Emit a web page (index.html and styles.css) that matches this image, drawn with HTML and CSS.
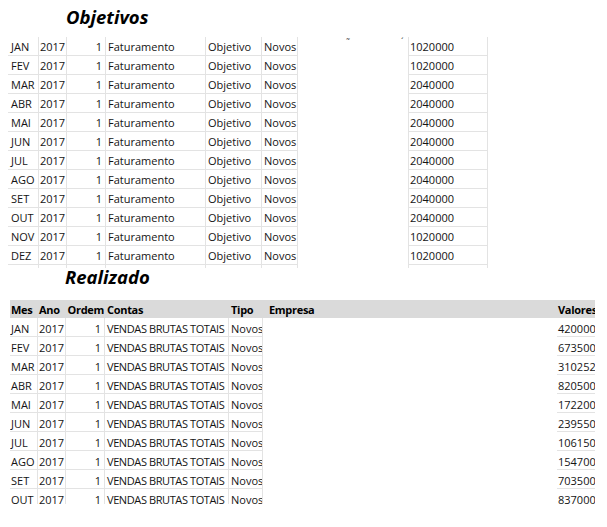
FILE: index.html
```html
<!DOCTYPE html>
<html lang="pt">
<head>
<meta charset="utf-8">
<title>Objetivos e Realizado</title>
<link rel="stylesheet" href="styles.css">
</head>
<body>
<div class="page">
  <h1 class="title title-obj">Objetivos</h1>
  <div class="obj">
    <div class="orow"><div class="c m">JAN</div><div class="c y">2017</div><div class="c o">1</div><div class="c">Faturamento</div><div class="c">Objetivo</div><div class="c">Novos</div><div class="c e"><span class="mk1">˜</span><span class="mk2">´</span></div><div class="c v">1020000</div></div>
    <div class="orow"><div class="c m">FEV</div><div class="c y">2017</div><div class="c o">1</div><div class="c">Faturamento</div><div class="c">Objetivo</div><div class="c">Novos</div><div class="c e"></div><div class="c v">1020000</div></div>
    <div class="orow"><div class="c m">MAR</div><div class="c y">2017</div><div class="c o">1</div><div class="c">Faturamento</div><div class="c">Objetivo</div><div class="c">Novos</div><div class="c e"></div><div class="c v">2040000</div></div>
    <div class="orow"><div class="c m">ABR</div><div class="c y">2017</div><div class="c o">1</div><div class="c">Faturamento</div><div class="c">Objetivo</div><div class="c">Novos</div><div class="c e"></div><div class="c v">2040000</div></div>
    <div class="orow"><div class="c m">MAI</div><div class="c y">2017</div><div class="c o">1</div><div class="c">Faturamento</div><div class="c">Objetivo</div><div class="c">Novos</div><div class="c e"></div><div class="c v">2040000</div></div>
    <div class="orow"><div class="c m">JUN</div><div class="c y">2017</div><div class="c o">1</div><div class="c">Faturamento</div><div class="c">Objetivo</div><div class="c">Novos</div><div class="c e"></div><div class="c v">2040000</div></div>
    <div class="orow"><div class="c m">JUL</div><div class="c y">2017</div><div class="c o">1</div><div class="c">Faturamento</div><div class="c">Objetivo</div><div class="c">Novos</div><div class="c e"></div><div class="c v">2040000</div></div>
    <div class="orow"><div class="c m">AGO</div><div class="c y">2017</div><div class="c o">1</div><div class="c">Faturamento</div><div class="c">Objetivo</div><div class="c">Novos</div><div class="c e"></div><div class="c v">2040000</div></div>
    <div class="orow"><div class="c m">SET</div><div class="c y">2017</div><div class="c o">1</div><div class="c">Faturamento</div><div class="c">Objetivo</div><div class="c">Novos</div><div class="c e"></div><div class="c v">2040000</div></div>
    <div class="orow"><div class="c m">OUT</div><div class="c y">2017</div><div class="c o">1</div><div class="c">Faturamento</div><div class="c">Objetivo</div><div class="c">Novos</div><div class="c e"></div><div class="c v">2040000</div></div>
    <div class="orow"><div class="c m">NOV</div><div class="c y">2017</div><div class="c o">1</div><div class="c">Faturamento</div><div class="c">Objetivo</div><div class="c">Novos</div><div class="c e"></div><div class="c v">1020000</div></div>
    <div class="orow"><div class="c m">DEZ</div><div class="c y">2017</div><div class="c o">1</div><div class="c">Faturamento</div><div class="c">Objetivo</div><div class="c">Novos</div><div class="c e"></div><div class="c v">1020000</div></div>
    <div class="orow stub"><div class="c m"></div><div class="c y"></div><div class="c o"></div><div class="c"></div><div class="c"></div><div class="c"></div><div class="c e"></div><div class="c v"></div></div>
  </div>

  <h1 class="title title-real">Realizado</h1>
  <div class="real">
    <div class="rrow head"><div class="c m">Mes</div><div class="c y">Ano</div><div class="c o">Ordem</div><div class="c">Contas</div><div class="c">Tipo</div><div class="c e">Empresa</div><div class="c v">Valores</div></div>
    <div class="rrow"><div class="c m">JAN</div><div class="c y">2017</div><div class="c o">1</div><div class="c caps">VENDAS BRUTAS TOTAIS</div><div class="c">Novos</div><div class="c e"></div><div class="c v">420000</div></div>
    <div class="rrow"><div class="c m">FEV</div><div class="c y">2017</div><div class="c o">1</div><div class="c caps">VENDAS BRUTAS TOTAIS</div><div class="c">Novos</div><div class="c e"></div><div class="c v">6735000</div></div>
    <div class="rrow"><div class="c m">MAR</div><div class="c y">2017</div><div class="c o">1</div><div class="c caps">VENDAS BRUTAS TOTAIS</div><div class="c">Novos</div><div class="c e"></div><div class="c v">3102520</div></div>
    <div class="rrow"><div class="c m">ABR</div><div class="c y">2017</div><div class="c o">1</div><div class="c caps">VENDAS BRUTAS TOTAIS</div><div class="c">Novos</div><div class="c e"></div><div class="c v">8205000</div></div>
    <div class="rrow"><div class="c m">MAI</div><div class="c y">2017</div><div class="c o">1</div><div class="c caps">VENDAS BRUTAS TOTAIS</div><div class="c">Novos</div><div class="c e"></div><div class="c v">1722000</div></div>
    <div class="rrow"><div class="c m">JUN</div><div class="c y">2017</div><div class="c o">1</div><div class="c caps">VENDAS BRUTAS TOTAIS</div><div class="c">Novos</div><div class="c e"></div><div class="c v">2395500</div></div>
    <div class="rrow"><div class="c m">JUL</div><div class="c y">2017</div><div class="c o">1</div><div class="c caps">VENDAS BRUTAS TOTAIS</div><div class="c">Novos</div><div class="c e"></div><div class="c v">1061500</div></div>
    <div class="rrow"><div class="c m">AGO</div><div class="c y">2017</div><div class="c o">1</div><div class="c caps">VENDAS BRUTAS TOTAIS</div><div class="c">Novos</div><div class="c e"></div><div class="c v">1547000</div></div>
    <div class="rrow"><div class="c m">SET</div><div class="c y">2017</div><div class="c o">1</div><div class="c caps">VENDAS BRUTAS TOTAIS</div><div class="c">Novos</div><div class="c e"></div><div class="c v">703500</div></div>
    <div class="rrow"><div class="c m">OUT</div><div class="c y">2017</div><div class="c o">1</div><div class="c caps">VENDAS BRUTAS TOTAIS</div><div class="c">Novos</div><div class="c e"></div><div class="c v">837000</div></div>
  </div>
</div>
</body>
</html>
```

FILE: styles.css
```css
* { box-sizing: border-box; }

html, body {
  margin: 0;
  padding: 0;
  background: #ffffff;
}

body {
  font-family: "Open Sans", "Noto Sans", sans-serif;
  font-size: 11px;
  color: #141414;
}

.page {
  width: 607px;
  height: 527px;
  overflow: hidden;
}

.title {
  margin: 0;
  font-weight: 700;
  font-style: italic;
  font-size: 18.5px;
  color: #000000;
  white-space: nowrap;
}

.title-obj {
  height: 37px;
  line-height: 34px;
  padding-left: 66px;
}

.title-real {
  height: 32px;
  line-height: 18px;
  padding-left: 65px;
}

/* ---------- Objetivos table ---------- */
.obj {
  margin-left: 8px;
  width: 480px;
}

.orow {
  display: grid;
  grid-template-columns: 31px 28px 39px 100px 56px 36px 110px 80px;
  height: 19px;
}

.orow.stub {
  height: 3px;
}

.c {
  overflow: hidden;
  white-space: nowrap;
  line-height: 17px;
  padding: 1px 2px 0;
  border-right: 1px solid #e3e3e3;
  border-bottom: 1px solid #e3e3e3;
}

.orow .m { padding-left: 3px; }
.y { padding-left: 1px; }
.o { text-align: right; padding-right: 3px; }

.orow .e {
  border-right: 0;
  border-bottom: 0;
  position: relative;
  overflow: visible;
}

.orow .v {
  border-left: 1px solid #e3e3e3;
  padding-left: 1px;
}

.orow.stub .c { border-bottom: 0; }

.mk1, .mk2 {
  position: absolute;
  top: 0;
  line-height: 9px;
  font-size: 9px;
  color: #333333;
}
.mk1 { left: 48px; }
.mk2 { left: 103px; }

/* ---------- Realizado table ---------- */
.real {
  margin-left: 10px;
  width: 585px;
  height: 204px;
  overflow: hidden;
}

.rrow {
  display: grid;
  grid-template-columns: 28px 28px 39px 124px 34px 294px 38px;
  height: 19px;
}

.rrow .c { padding-top: 2px; }

.rrow .m { padding-left: 1px; }

.caps { letter-spacing: -0.4px; }

.rrow .e {
  border-right: 0;
  border-bottom: 0;
}

.rrow .v {
  border-right: 0;
  padding-left: 1px;
  text-overflow: clip;
}

.rrow.head {
  height: 18px;
  background: #dadada;
}

.rrow.head .c {
  font-weight: 700;
  border: 0;
  padding-top: 2px;
  line-height: 16px;
  color: #000000;
  letter-spacing: -0.3px;
}

.rrow.head .o { padding-right: 1px; padding-left: 1px; }
.rrow.head .e { padding-left: 6px; }
.rrow.head .v { padding-left: 1px; padding-right: 0; overflow: visible; }
```
